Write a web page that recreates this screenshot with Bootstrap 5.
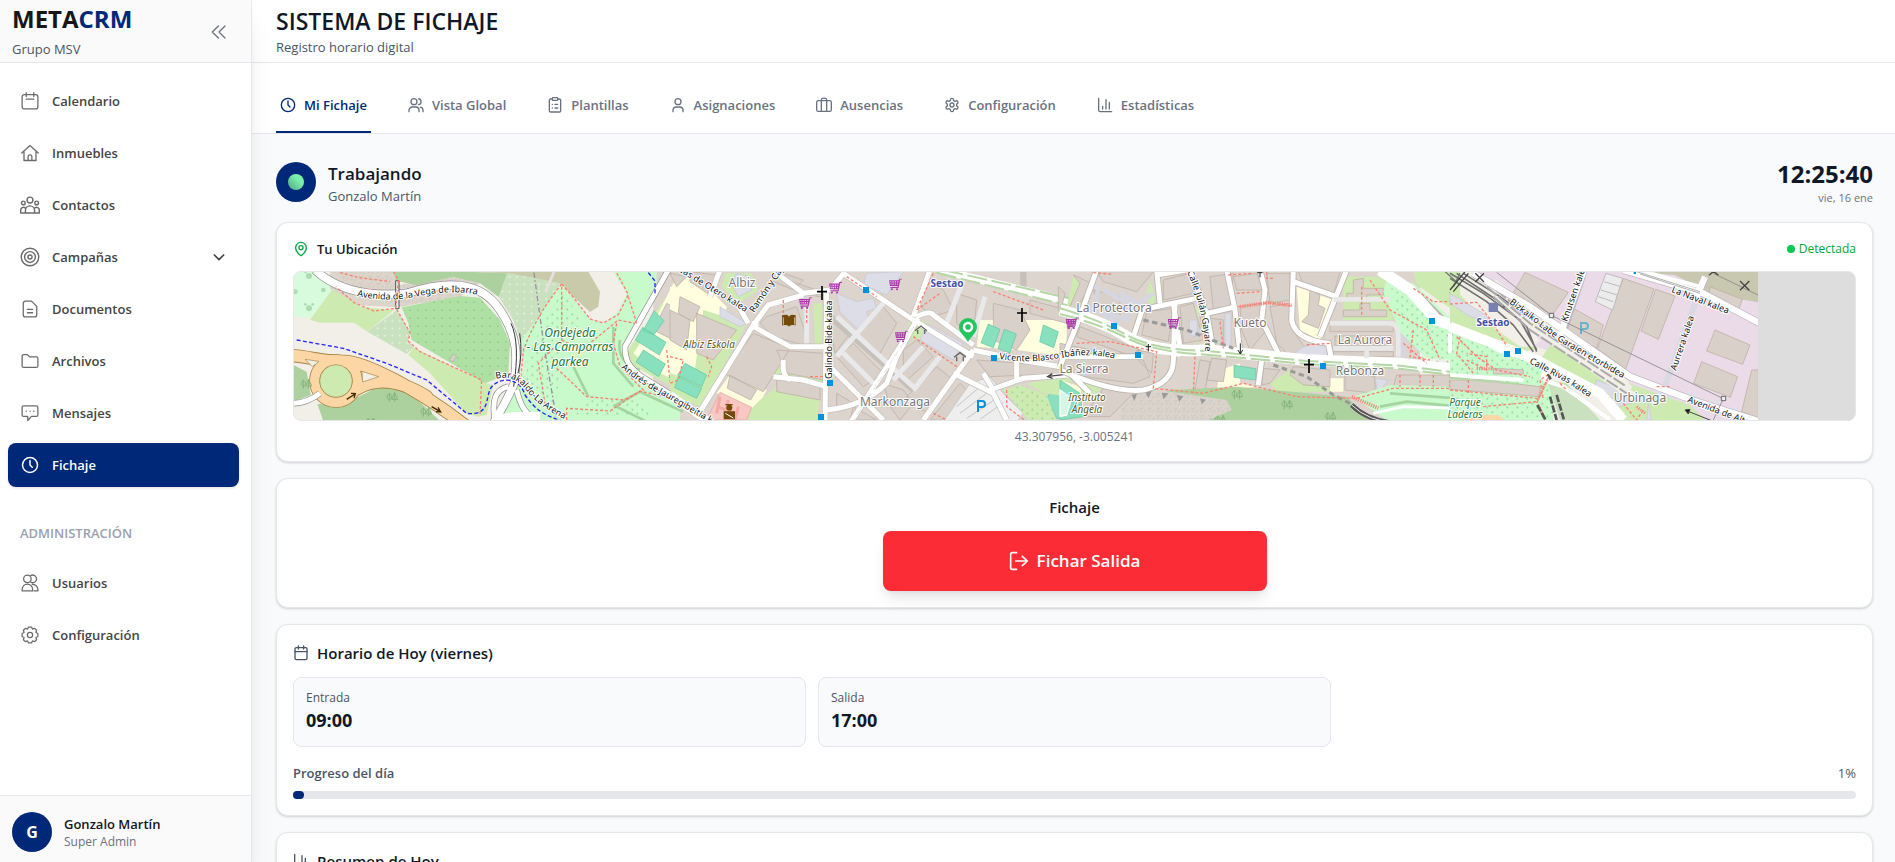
<!DOCTYPE html>
<html lang="es">
<head>
<meta charset="utf-8">
<meta name="viewport" content="width=device-width, initial-scale=1">
<title>METACRM - Sistema de Fichaje</title>
<link href="https://cdn.jsdelivr.net/npm/bootstrap@5.3.0/dist/css/bootstrap.min.css" rel="stylesheet">
<style>
:root{--navy:#002878;--line:#e5e7eb;--ink:#101828;--muted:#6a7282;--slate:#4a5565}
body{font-family:"Open Sans","Noto Sans",sans-serif;font-size:13px;line-height:20px;color:var(--ink);background:#f9fafb}
a{text-decoration:none;color:inherit}
svg.ic{fill:none;stroke:currentColor;stroke-width:2;stroke-linecap:round;stroke-linejoin:round;flex:none;width:16px;height:16px}
.side{width:252px;background:#fff;border-right:1px solid var(--line);box-shadow:0 20px 25px -5px rgba(0,0,0,.1),0 8px 10px -6px rgba(0,0,0,.1);z-index:2}
.side-head{height:63px;background:#fafafa;border-bottom:1px solid var(--line)}
.brand{font-size:24px;line-height:32px;font-weight:700;color:#171717}
.brand span{color:var(--navy)}
.side-nav{padding:16px 12px 0 8px}
.side-link{height:44px;padding:0 12px;border-radius:8px;font-weight:600;color:#454545;gap:12px}
.side-link svg.ic{width:20px;height:20px;padding:1px;color:#6b6b6b;stroke-width:1.7}
.side-link svg.wide{padding:0}
.side-link svg.chev{width:16px;height:16px;padding:0;color:#454545;stroke-width:2.5}
.side-link.on{background:var(--navy);color:#fff;box-shadow:0 1px 3px rgba(0,0,0,.12)}
.side-link.on svg.ic{color:#fff;stroke-width:2}
.side-label{font-size:13px;font-weight:600;color:#99a1af;padding:28px 12px 10px}
.side-foot{height:67px;padding-top:6px;background:#fafafa;border-top:1px solid var(--line)}
.disc{width:40px;height:40px;border-radius:50%;background:var(--navy);color:#fff;flex:none}
.top{height:63px;background:#fff;border-bottom:1px solid var(--line)}
.top h1{font-size:23px;line-height:32px;font-weight:600}
.tabs{height:71px;background:#fff;border-bottom:1px solid var(--line);gap:33px}
.tabs a{font-weight:600;color:var(--muted);padding:16px 4px 0;gap:8px;border-bottom:2px solid transparent}
.tabs a.on{color:var(--navy);border-color:var(--navy)}
.content{padding:24px 22px 0 24px;gap:16px}
.panel{background:#fff;border:1px solid var(--line);border-radius:12px;padding:16px;box-shadow:0 1px 3px rgba(0,0,0,.1),0 1px 2px rgba(0,0,0,.08)}
.t-sm{font-size:12px;line-height:16px}
.t-xs{font-size:11px;line-height:16px}
.t-h{font-size:15px;line-height:24px;font-weight:600}
.t-lg{font-size:17px;line-height:24px}
.hour{font-size:18px;line-height:28px}
.clock{font-size:24px;line-height:32px;font-weight:700}
.muted{color:var(--muted)}.slate{color:var(--slate)}.ok{color:#00a63e}
.live{width:16px;height:16px;border-radius:50%;background:linear-gradient(45deg,#4fa38a,#7bf1a8 65%)}
.map{height:150px;border:1px solid var(--line);border-radius:8px;background:#ddd;overflow:hidden}
.map svg{display:block}
.out{width:384px;max-width:100%;height:60px;border:0;border-radius:8px;background:#fb2c36;color:#fff;font-size:17px;font-weight:600;box-shadow:0 10px 15px -3px rgba(0,0,0,.1),0 4px 6px -4px rgba(0,0,0,.1)}
.out svg.ic{width:20px;height:20px}
.slot{height:70px;border:1px solid var(--line);border-radius:8px;background:#f9fafb;padding:12px}
.hours{display:grid;grid-template-columns:repeat(3,1fr);gap:12px}
.track{height:8px;border-radius:4px;background:#e5e7eb}
.track div{height:8px;border-radius:4px;background:var(--navy)}
.map text{font-family:"Noto Sans",sans-serif;paint-order:stroke;stroke:#fff;stroke-width:2px;stroke-linejoin:round}
.st{font-size:9px;fill:#111}
.pl{font-size:12px;fill:#777}
.gr{font-size:12px;font-style:italic;fill:#1c7a3a}
.sc{font-size:10px;font-style:italic;fill:#5c5a1a}
.sn{font-size:10px;font-weight:700;fill:#4451a8}
.b{fill:#d9d0c9;stroke:#c0b2a6;stroke-width:2.5}
.lg{fill:#cdebb0}.fo{fill:#add19e}.pk{fill:#c8facc}.ye{fill:#ffffe0}.pi{fill:#88e0be;stroke:#5fc4a0;stroke-width:2}.pz{fill:#dddde8;stroke:#c5c5d4;stroke-width:2}
.rd{fill:none;stroke:#fa8072;stroke-width:4;stroke-dasharray:9 6}
.bl{fill:none;stroke:#2323ff;stroke-width:4;stroke-dasharray:12 7}
.rl{fill:none;stroke:#707070;stroke-width:5}
.gl{fill:none;stroke:#b5d6a5;stroke-width:6;stroke-dasharray:60 14}
.bus{fill:#0092da}
</style>
</head>
<body>
<svg width="0" height="0" class="position-absolute" aria-hidden="true"><defs>
<symbol id="clock" viewBox="0 0 24 24"><circle cx="12" cy="12" r="10"/><path d="M12 6v6l3 3"/></symbol>
<symbol id="cal" viewBox="0 0 24 24"><rect x="1.500" y="3.500" width="21" height="19" rx="3"/><path d="M7 1v5M17 1v5M7 9.500h10"/></symbol>
<symbol id="gear" viewBox="0 0 24 24"><circle cx="12" cy="12" r="3.500"/><path d="M8.700 4.100L10 1.500h4l1.300 2.600 3-.9 2.500 2.500-.9 3 2.600 1.300v4l-2.600 1.300.9 3-2.500 2.500-3-.9-1.300 2.600h-4l-1.300-2.600-3 .9-2.500-2.500.9-3L1.500 14v-4l2.600-1.300-.9-3 2.500-2.500z"/></symbol>
<symbol id="bars" viewBox="0 0 24 24"><path d="M2.500 2v18a2 2 0 0 0 2 2H22M8.500 18v-4M13.500 18V4M18.500 18V8"/></symbol>
<symbol id="cart" viewBox="0 0 40 34"><path d="M38 1h-6l-5 24H5M3 6h27l-3 13H5zM9 6l1 13M16 6v13M23 6l-1 13M3 12h26" fill="none" stroke="#ac39ac" stroke-width="3"/><circle cx="9" cy="30" r="3" fill="#ac39ac"/><circle cx="24" cy="30" r="3" fill="#ac39ac"/></symbol>
<pattern id="dots" width="24" height="24" patternUnits="userSpaceOnUse"><circle cx="6" cy="6" r="1.600" fill="#5f9b5c"/></pattern>
<pattern id="plus" width="22" height="22" patternUnits="userSpaceOnUse"><path d="M4 7h6M7 4v6" stroke="#eef7ea" stroke-width="2"/></pattern>
<pattern id="shrub" width="30" height="26" patternUnits="userSpaceOnUse"><circle cx="7" cy="7" r="3" fill="#97d3a0"/><circle cx="22" cy="19" r="3" fill="#97d3a0"/></pattern>
<pattern id="rock" width="26" height="22" patternUnits="userSpaceOnUse"><path d="M3 4l5 3M14 2l-4 6M20 9l4 4M5 15l6-2M16 18l5-3" stroke="#c5bcb2" stroke-width="2.500"/></pattern>
</defs></svg>

<div class="d-flex vh-100 overflow-hidden">
<aside class="side d-flex flex-column flex-shrink-0 position-relative">
  <div class="side-head flex-shrink-0 d-flex justify-content-between align-items-center ps-2 pe-4">
    <div class="ps-1"><div class="brand">META<span>CRM</span></div><div class="slate mt-1">Grupo MSV</div></div>
    <button class="btn p-0 border-0 lh-1 muted" aria-label="Contraer menú"><svg class="ic" viewBox="0 0 24 24"><path d="M11 3l-9 9 9 9M21 3l-9 9 9 9"/></svg></button>
  </div>
  <nav class="side-nav d-flex flex-column gap-2 flex-grow-1">
    <a href="#" class="side-link d-flex align-items-center"><svg class="ic"><use href="#cal"/></svg>Calendario</a>
    <a href="#" class="side-link d-flex align-items-center"><svg class="ic" viewBox="0 0 24 24"><path d="M1 12L12 2l11 10M4 9.500V22h16V9.500M9.500 22v-5a2.500 2.500 0 0 1 5 0v5"/></svg>Inmuebles</a>
    <a href="#" class="side-link d-flex align-items-center"><svg class="ic wide" viewBox="0 0 24 24"><circle cx="12" cy="6" r="3.500"/><circle cx="4" cy="9.500" r="2.200"/><circle cx="20" cy="9.500" r="2.200"/><path d="M6.500 21.500v-3a5.500 5.500 0 0 1 11 0v3zM6 21.500H.8V18a3.300 3.300 0 0 1 5.400-2.500M18 21.500h5.200V18a3.300 3.300 0 0 0-5.400-2.500"/></svg>Contactos</a>
    <a href="#" class="side-link d-flex align-items-center"><svg class="ic wide" viewBox="0 0 24 24"><circle cx="12" cy="12" r="10.500"/><circle cx="12" cy="12" r="6.500"/><circle cx="12" cy="12" r="2.500"/></svg><span class="flex-grow-1">Campañas</span><svg class="ic chev" viewBox="0 0 24 24"><path d="M5 9l7 7 7-7"/></svg></a>
    <a href="#" class="side-link d-flex align-items-center"><svg class="ic" viewBox="0 0 24 24"><path d="M14 1.500H6a3 3 0 0 0-3 3v15a3 3 0 0 0 3 3h12a3 3 0 0 0 3-3V8.500zM8.500 12.500h7M8.500 17h7"/></svg>Documentos</a>
    <a href="#" class="side-link d-flex align-items-center"><svg class="ic" viewBox="0 0 24 24"><path d="M1.500 5.500a2 2 0 0 1 2-2h5l3 3h9a2 2 0 0 1 2 2v10a2 2 0 0 1-2 2h-17a2 2 0 0 1-2-2z"/></svg>Archivos</a>
    <a href="#" class="side-link d-flex align-items-center"><svg class="ic" viewBox="0 0 24 24"><path d="M3.500 2.500h17a2 2 0 0 1 2 2v10a2 2 0 0 1-2 2H14L9 22v-5.500H3.500a2 2 0 0 1-2-2v-10a2 2 0 0 1 2-2zM7 9.500h.2M12 9.500h.2M17 9.500h.2"/></svg>Mensajes</a>
    <a href="#" class="side-link on d-flex align-items-center"><svg class="ic"><use href="#clock"/></svg>Fichaje</a>
    <div class="side-label">ADMINISTRACIÓN</div>
    <a href="#" class="side-link d-flex align-items-center"><svg class="ic" viewBox="0 0 24 24"><circle cx="8.500" cy="6.500" r="5"/><path d="M13 2.200a5 5 0 1 1 0 8.600M1.500 22.500v-2a7 7 0 0 1 14 0v2zM15 14a7 7 0 0 1 7.500 6.500v2h-5"/></svg>Usuarios</a>
    <a href="#" class="side-link d-flex align-items-center"><svg class="ic"><use href="#gear"/></svg>Configuración</a>
  </nav>
  <div class="side-foot flex-shrink-0 d-flex align-items-center gap-2 ps-2">
    <div class="disc d-flex align-items-center justify-content-center fw-bold fs-6 ms-1">G</div>
    <div class="ps-1"><div class="fw-semibold">Gonzalo Martín</div><div class="t-sm muted">Super Admin</div></div>
  </div>
</aside>

<main class="flex-grow-1 d-flex flex-column overflow-hidden">
  <header class="top flex-shrink-0 ps-4 d-flex flex-column justify-content-center"><h1 class="m-0">SISTEMA DE FICHAJE</h1><div class="slate">Registro horario digital</div></header>
  <nav class="tabs flex-shrink-0 d-flex ps-4">
    <a href="#" class="on d-flex align-items-center"><svg class="ic"><use href="#clock"/></svg>Mi Fichaje</a>
    <a href="#" class="d-flex align-items-center"><svg class="ic" viewBox="0 0 24 24"><circle cx="9" cy="7" r="4.500"/><path d="M1.500 22v-2a5 5 0 0 1 5-5h5a5 5 0 0 1 5 5v2M16 2.600a4.500 4.500 0 0 1 0 8.800M22.500 22v-2a5 5 0 0 0-4-4.900"/></svg>Vista Global</a>
    <a href="#" class="d-flex align-items-center"><svg class="ic" viewBox="0 0 24 24"><rect x="8" y="1" width="8" height="4" rx="1"/><path d="M16 3h2.500a2 2 0 0 1 2 2v15.500a2 2 0 0 1-2 2h-13a2 2 0 0 1-2-2V5a2 2 0 0 1 2-2H8M12 11h4M12 16.500h4M8 11h.1M8 16.500h.1"/></svg>Plantillas</a>
    <a href="#" class="d-flex align-items-center"><svg class="ic" viewBox="0 0 24 24"><circle cx="12" cy="7" r="4.500"/><path d="M4.500 22v-2a5 5 0 0 1 5-5h5a5 5 0 0 1 5 5v2"/></svg>Asignaciones</a>
    <a href="#" class="d-flex align-items-center"><svg class="ic" viewBox="0 0 24 24"><rect x="1" y="5.500" width="22" height="16" rx="2.500"/><path d="M16 21V4a2 2 0 0 0-2-2h-4a2 2 0 0 0-2 2v17"/></svg>Ausencias</a>
    <a href="#" class="d-flex align-items-center"><svg class="ic" viewBox="0 0 24 24"><path d="M12.220 2h-.44a2 2 0 0 0-2 2v.18a2 2 0 0 1-1 1.730l-.43.25a2 2 0 0 1-2 0l-.15-.08a2 2 0 0 0-2.730.73l-.22.38a2 2 0 0 0 .73 2.730l.15.1a2 2 0 0 1 1 1.720v.51a2 2 0 0 1-1 1.740l-.15.09a2 2 0 0 0-.73 2.730l.22.38a2 2 0 0 0 2.730.73l.15-.08a2 2 0 0 1 2 0l.43.25a2 2 0 0 1 1 1.730V20a2 2 0 0 0 2 2h.44a2 2 0 0 0 2-2v-.18a2 2 0 0 1 1-1.730l.43-.25a2 2 0 0 1 2 0l.15.08a2 2 0 0 0 2.730-.73l.22-.39a2 2 0 0 0-.73-2.730l-.15-.08a2 2 0 0 1-1-1.740v-.5a2 2 0 0 1 1-1.740l.15-.09a2 2 0 0 0 .73-2.730l-.22-.38a2 2 0 0 0-2.730-.73l-.15.08a2 2 0 0 1-2 0l-.43-.25a2 2 0 0 1-1-1.730V4a2 2 0 0 0-2-2z"/><circle cx="12" cy="12" r="3"/></svg>Configuración</a>
    <a href="#" class="d-flex align-items-center"><svg class="ic"><use href="#bars"/></svg>Estadísticas</a>
  </nav>

  <div class="content d-flex flex-column">
    <div class="d-flex justify-content-between align-items-center">
      <div class="d-flex align-items-center"><div class="disc d-flex align-items-center justify-content-center me-2"><div class="live"></div></div>
        <div class="ps-1 pt-1"><div class="t-lg fw-semibold">Trabajando</div><div class="slate">Gonzalo Martín</div></div></div>
      <div class="text-end"><div class="clock">12:25:40</div><div class="t-xs muted">vie, 16 ene</div></div>
    </div>

    <section class="panel">
      <div class="d-flex justify-content-between align-items-center mb-2 pb-1">
        <div class="d-flex align-items-center gap-2 fw-semibold"><svg class="ic ok" viewBox="0 0 24 24"><path d="M20 10c0 5-5.500 10.200-7.400 11.800a1 1 0 0 1-1.200 0C9.500 20.200 4 15 4 10a8 8 0 0 1 16 0z"/><circle cx="12" cy="10" r="3"/></svg>Tu Ubicación</div>
        <div class="d-flex align-items-center gap-1 t-sm ok"><svg width="8" height="8"><circle cx="4" cy="4" r="4" fill="#00c950"/></svg>Detectada</div>
      </div>
      <div class="map"><svg width="1464" height="148" viewBox="294 272 1464 148" role="img" aria-label="Mapa de tu ubicación">
<rect x="294" y="272" width="1464" height="148" fill="#f2efe9"/>
<g transform="translate(280 260) scale(.33333)">
  <path d="M1120 30H3420V490H1120z" fill="#dcd4cd"/>
  <path d="M40 35h90l35 42-75 98-50-6z" fill="#d7fbdc"/>
  <path class="lg" d="M90 180l72-100 80 60 100 10-80 65-40-27H120zM385 285l15-23 205 100-5 108-40-8L450 340zM600 365l40 10-20 90-30 5z"/>
  <path d="M150 35h190l20 40 150-30 90 25-60 40-190 32-110-6-90-50z" fill="#ddd5cb"/><path d="M150 35h190l20 40 150-30 90 25-60 40-190 32z" fill="url(#rock)"/>
  <path class="fo" d="M340 35h220l122 5-25 72-57-42-80-20-110 25-60-12z"/>
  <path d="M560 35h365l35 60-5 45-25 16-50-46-42-40-155-30z" fill="#c8caaa"/>
  <path fill="#aedfa3" d="M365 142l175-34 60 5 60 67 30 70-5 92-70 28-220-130-10-50z"/><path fill="url(#dots)" d="M365 142l175-34 60 5 60 67 30 70-5 92-70 28-220-130-10-50z"/>
  <path fill="#c9e1bf" d="M262 215l88-65 40 65-5 25 15 22-20 20zM682 38l160 32-82 140-38 36-22-66-44-70z"/><path fill="url(#plus)" d="M262 215l88-65 40 65-5 25 15 22-20 20zM682 38l160 32-82 140-38 36-22-66-44-70z"/>
  <path class="pk" d="M845 70l85 108 40 12 40-30 30-58-40-67h130v65l-100 150v50l170 130v50H630l100-150-5-90z"/><path fill="url(#shrub)" d="M845 90l60 90-60 100-20 180-90-60 10-120zM930 420l110-10 100 60H880z"/>
  <path class="lg" d="M1030 300l20-40 110-150 20 20v250l-80-40z"/>
  <path class="ye" d="M1180 70l60-30 100 100-30 160-60 90-130-60-60-50 60-90z"/>
  <path class="b" d="M1160 130l60 30v100l-40-20-60-30zM1170 40l50 10-30 30z"/>
  <path class="pi" d="M1122 152l30 30-30 42-32-12zM1088 202l70 45-20 38-72-45zM1090 270l66 42-20 38-68-44z"/>
  <path class="fo" d="M112 432l88-4 100-50 90 20 90 85H130zM40 315l40 20 12 70-52 20z"/>
  <g fill="none" stroke-linecap="round"><g stroke="#a58342"><circle cx="168" cy="363" r="64" stroke-width="33"/><path stroke-width="40" d="M30 286C90 290 130 306 190 304S420 390 560 500M232 386C290 352 360 360 440 410"/></g>
  <g stroke="#fcd6a4"><circle cx="168" cy="363" r="64" stroke-width="28"/><path stroke-width="35" d="M30 286C90 290 130 306 190 304S420 390 560 500M232 386C290 352 360 360 440 410"/></g></g>
  <circle class="lg" cx="168" cy="363" r="49" stroke="#a58342" stroke-width="2"/>
  <path d="M75 298l42 6-20 16zM246 334l50 16-48 16z" fill="#f2efe9" stroke="#a58342" stroke-width="2"/>
  <path d="M200 418l25-16m-12-2l13 1-4 13M455 440l25 14m-6-12l8 14-14-1" stroke="#402800" stroke-width="4" fill="none"/>
  <path d="M1020 240c-10 50 20 80 60 90M1000 440l80-45 130 60M880 320l45 90M1000 200v110l60 70M1000 435l100 50" stroke="#a5d4a0" stroke-width="8" fill="none"/>
  <g fill="none" stroke="#8e8e8e" stroke-width="27"><path d="M105 30C170 90 260 112 380 100C500 62 600 60 660 150S710 300 703 370C690 400 670 440 640 490"/><path stroke-width="19" d="M645 480c-10-60 0-90 40-100M710 390c10 40 20 70 70 100M1165 30l-130 230c0 40 10 60 50 90l130 80M40 430q40 0 80-30"/></g>
  <g fill="none" stroke="#fff" stroke-width="23"><path d="M105 30C170 90 260 112 380 100C500 62 600 60 660 150S710 300 703 370C690 400 670 440 640 490"/><path stroke-width="15" d="M645 480c-10-60 0-90 40-100M710 390c10 40 20 70 70 100M1165 30l-130 230c0 40 10 60 50 90l130 80M40 430q40 0 80-30"/></g>
  <path d="M640 480l60-12 80 0" stroke="#fff" stroke-width="24"/>
  <path d="M693 190q28 60 8 190M719 220q10 60-5 120" stroke="#333" stroke-width="3" fill="none"/>
  <path d="M347 62h10v84h-10z" fill="#eee" stroke="#555" stroke-width="3"/>
  <path d="M508 300l12-18 10 8-12 16z" fill="#d9d0c9" stroke="#aaa" stroke-width="2"/>
  <path class="bl" d="M50 240l140 25 130 45 120 50 120 100c80 10 50-60 80-85s80-20 95 30c35 50 60 60 110 78M1105 38l20 25v40"/>
  <path class="rd" d="M180 38l60 15 90 12M340 35l15 25-8 85-65 8-60-25-55-48M350 148l40 70-5 25 35 32 185 85-5 105M845 72q-80 100-115 200l-10 110M845 72l35 40 50 65 40 12 45-25 30-60-40-75M845 80v160l-70 70 20 120 60 45M845 240l60 30 110-90 50 10M1010 190l-10 60 20 70 70 70-60 30-110-10-100-95M860 480v-35l130 8 90-60 130 30M1045 110l25 80M1160 270l10 90 30-60"/>
  <path d="M762 38l30 220 38 222" stroke="#998fa5" stroke-width="4" stroke-dasharray="16 7 5 7" fill="none"/>
  <path d="M822 35l-25 60" stroke="#e8e0e0" stroke-width="8"/>
  <g fill="none" stroke="#86b57c" stroke-width="3"><path id="tr" d="M328 400c-10 6-8 18 0 18s10-12 0-18v26M344 398l-9 20h18zv28"/><use href="#tr" x="-258" y="-40"/><use href="#tr" x="102" y="44"/><use href="#tr" x="-64" y="76"/></g>
  <g fill="#aedcb2"><circle cx="87" cy="48" r="9"/><circle cx="77" cy="36" r="4"/><circle cx="99" cy="36" r="4"/><circle cx="87" cy="145" r="9"/><circle cx="76" cy="133" r="4"/><circle cx="98" cy="133" r="4"/><circle cx="130" cy="90" r="7"/><circle cx="46" cy="95" r="7"/></g>
</g>
<g transform="translate(670 260) scale(.33333)">
  <path class="ye" d="M0 80l60 10 60 60 60 40-60 100-20 130L0 380zM190 330l100 60-30 60-120-50zM930 180h260v110l-150-20-120-10z"/>
  <path class="lg" d="M100 150l130 40-30 60-110 190-90-40v-60l70 20zM430 130h25v120l-20 10zM320 380l130 40-10 60H210l60-60zM290 300l80 10 100 50v20h-60l-110-30zM165 40h80l20 50-60 40-50-50zM720 170l60 20-30 50-40-10z"/>
  <path class="b" d="M30 110l60 30-20 45-45-25zM0 150l60 30-10 90-50-30zM80 160l120 50-70 90-50-20zM250 220l110 45-80 130-120-55zM180 345l80 45-18 30-70-35zM60 35l80 10-20 60-60-40zM350 60l120 40-20 10-60-10-30-30zM290 170l90-30 40 120-110-30-40-40zM320 270l140 10v80l-110-20zM320 360l130 10v50l-130-25zM480 180l60 40-45 60zM500 290l50-40 90 90-60 40zM500 400l50 30-50 20zM560 220l70 60 50-90-40-50zM640 370l60 20 30 40-40 50-30-40zM700 270l40-30 50 50-90 80zM800 320l50 40-80 100-60-50zM870 370l50 50-60 60h-80zM770 60l50 30 30 60-60 20-50-40zM860 100l60 20-10 110-50-40zM970 130l80 20 30 60-40 60-70-30zM1080 120l110 30v40l-110-30zM920 300l270 20v20l-230 10zM550 440l70 40h-80zM300 60l40-20 60 20-30 30z"/>
  <path class="pi" d="M45 310l65 35-15 35-72-35zM25 350l70 35-15 30-66-32zM955 192l35 16-20 55-37-15zM1003 208l36 14-20 58-35-15zM1120 195l45 20-14 48-42-18zM1160 370l30 15v90h-30l-30-60z"/>
  <path fill="#f8c8c4" stroke="#e6a09a" stroke-width="2" d="M150 397l95 45-15 38H110z"/>
  <path class="pz" d="M500 100l60 25 50-10 10 30-30 10 10 40-40 10-50-50zM200 40l40 10 5 40-40 20-20-35zM770 190l110 60-30 50-100-60zM590 40l110-5-50 70-70-30zM150 140l80 50-20 10-60-30z"/>
  <path d="M900 370l60-20 40 50 60 60-20 25H820z" fill="#eee" stroke="#c8c8c8" stroke-width="3"/><path d="M860 440l70-60M870 460l80-60M890 475l90-60M930 478l70-50" stroke="#c4c4c4" stroke-width="3"/>
  <path class="lg" d="M1000 390l50-15 80 30 30 80h-80zM1070 370l130-20v60l-80-10z"/><path d="M1000 390l50-15 80 30 30 80h-80z" fill="url(#shrub)"/>
  <g fill="none" stroke="#c6c0bb" stroke-width="19" stroke-linejoin="round"><path d="M150 30l-30 80M320 40l80 60 80-10 45-55M400 105l-105 30-45 60-160 260M235 190l-40-70M250 200l110 60h110M470 100l-5 380M470 160l260 230M520 40l210 140 180 110M540 490L745 175M480 320l160 160M470 450q110-10 180-80l30-80 60-110M910 270l-150 210M910 270l140 30 150 25M960 390l100-35 140-10M740 170q40-20 50-5l120 90M310 350l90 10 70 20M1060 35v60M850 340l120 60 40 80M340 300q-5 50 20 60M1040 290v70M940 340l30 50M780 30l-50 140"/></g>
  <g fill="none" stroke="#e9e9ec" stroke-width="15"><path d="M500 290L640 130M670 360l90-100M730 390l80-100M500 170l240 220M410 130v120M520 280l90 90M830 190l50-130M910 230l35-120"/></g>
  <g fill="none" stroke="#fff" stroke-width="15" stroke-linejoin="round"><path d="M150 30l-30 80M320 40l80 60 80-10 45-55M400 105l-105 30-45 60-160 260M235 190l-40-70M250 200l110 60h110M470 100l-5 380M520 40l210 140 180 110M540 490L745 175M480 320l160 160M470 450q110-10 180-80l30-80 60-110M910 270l-150 210M910 270l140 30 150 25M960 390l100-35 140-10M740 170q40-20 50-5l120 90M310 350l90 10 70 20M850 340l120 60 40 80M340 300q-5 50 20 60M1040 290v70M940 340l30 50M780 30l-50 140"/><path stroke-width="24" d="M0 405l110 75M810 30l390 95M245 195h20"/></g>
  <path class="gl" d="M800 38l400 100M820 30l380 85"/>
  <path class="rd" d="M0 290l40 10-15 60-25 10M110 290l15 30-10 30M530 50l90 60M340 120v60M730 230l130 90M420 350h50M790 460l40 20M790 40l-50 110M970 95l150 55M410 150v45M1010 390v50l60 45M740 150l70-50"/>
  <path d="M545 490l190-295" stroke="#e2e2e2" stroke-width="3" stroke-dasharray="18 12"/>
  <path d="M150 410l-10 50M175 420l-10 55M205 440l-10 40M140 440l60 20" stroke="#f5aaa5" stroke-width="9"/>
  <path d="M336 166q20-6 21 6q2-12 20-6v30q-18-4-20 4q-2-8-21-4z" fill="#734a08"/><path d="M340 172v22M374 172v22" stroke="#fff" stroke-width="2"/>
  <circle cx="178" cy="443" r="9" fill="#734a08"/><path d="M163 456h30v20h-30zM166 434h22" fill="#734a08" stroke="#734a08" stroke-width="4"/><path d="M166 460l24 14" stroke="#fff" stroke-width="3"/>
  <g fill="none" stroke="#666" stroke-width="4"><path d="M735 212l18-14 18 14M743 210v12M764 210v12M852 292l18-14 18 14M860 290v14M880 290v14"/></g>
  <use href="#cart" x="476" y="66" width="42" height="36"/><use href="#cart" x="656" y="56" width="42" height="36"/><use href="#cart" x="386" y="112" width="42" height="36"/><use href="#cart" x="674" y="212" width="42" height="36"/><use href="#cart" x="1187" y="172" width="42" height="36"/>
  <path d="M456 78v42M441 95h30M1056 144v42M1041 159h30" stroke="#000" stroke-width="5"/>
  <path class="bus" d="M579 81h18v18h-18zM471 360h18v18h-18zM444 462h18v18h-18zM963 285h18v18h-18z"/>
  <path d="M1180 344l-45 5m12-8l-14 9 15 5" stroke="#444" stroke-width="4" fill="none"/>
</g>
<g transform="translate(1060 260) scale(.33333)">
  <path class="lg" d="M40 50l50 20-40 90-30-20zM270 60l20 60-20 20-10-40zM385 150l30-10v110l-40-10zM630 370l60-40 120 40v25H650zM30 340l110 30-60 60-30-40zM850 50h130l20 130H850zM1060 35h140v130l-130-90z"/>
  <path class="ye" d="M710 80l110 40-40 120-60-30zM480 330l60-20v60l60 10-130 10zM810 355h40v40h-40zM0 210l20-5-8 70-12 4zM0 360l60 20 10 60-70-10z"/>
  <path class="b" d="M40 45l55 25-60 100-40-20V80l20 20-10 40 20 10 35-80zM310 60l80-20 10 60-90 20zM100 90l80 20v60l-60-30zM110 35h170l-50 60-100-30zM260 155l80-10-15 100-80-20zM60 200l180 70-20 20-170-60zM360 140l40-10 30 110-60 10zM450 50l70-10-10 100-50 10zM420 170l70 10v90l-50-10zM520 50l70-10 20 50h-80zM540 140l60-10 20 80-50 60-25-60zM620 40h70v80l-60 10zM630 140l60-10 20 100 40 50-50 20-50-50zM420 300l30 5-15 90-30-5zM455 295l45 5-10 65-50-5zM610 325l50 5-30 40-25 5zM700 320l110 10v50l-80-5-40-30zM855 330l90 20v50l-90-10zM750 90l30 15-5 30 20 10-20 60-50-20 20-20zM715 35h125l-20 70-90-30zM880 60l30-5v30h60v20h-50v15h-60v-20h20zM850 150h50v-20h30v20h50v20H850zM810 195h190v20H810zM825 228h170v25l-60 5h-110zM810 275h190v15H820zM1010 345h190v35H1000zM0 250l190 40 60 10 20 50-50 20-220-30zM140 370l80 30-70 70h-80zM230 270l50 10-5 60-40-40z"/>
  <path d="M95 75l20 10-10 60 60 40M180 100l40 20-20 60-80-30M280 100l-60 40-90-50M1030 190v110" stroke="#d6d6e2" stroke-width="13" fill="none"/><path class="pz" d="M700 285q45-50 105-25l10 35zM388 180h24v50l-24-5zM495 160h18v100h-18zM945 355l40 5-30 40z"/>
  <path class="pi" d="M522 316l66 10v34l-66-8zM0 360l60 40 10 70-70 10z"/><path d="M0 390l35 25-15 50-20 5z" fill="#d5f7e4" stroke="#fff" stroke-width="4"/>
  <path class="fo" d="M330 390l200-10 330 30 70 70H180z"/><path fill="#dbd4cc" d="M180 480q-5-50 50-75l100-10 170 25 15 30-70 30z"/><path fill="url(#rock)" d="M180 480q-5-50 50-75l100-10 170 25 15 30-70 30z"/>
  <path d="M215 405l8 18 8-22M255 395l10 20 10-22M305 398l6 20 14-18M350 405l8 20 12-16M420 415l6 18 12-14" fill="#999"/>
  <path class="pk" d="M880 410l110-35 210 5 60 100H980zM980 60l80 10 140 130v100l-100-5-80-80-50-120z"/><path d="M990 80l90 60 120 110v80h-90l-80-110z" fill="url(#shrub)"/>
  <path d="M990 400l200 15M960 440l80-15 160 15" stroke="#a5d4a0" stroke-width="8" fill="none"/>
  <g fill="none" stroke="#bab4ae" stroke-width="20"><path d="M110 30L60 170l-60 150M290 30l10 100M240 150l170-35M250 140l-30 90M340 130l20 130-5 30M440 160l20 110M390 30l50 130 90-20M500 30l25 120 15 130M600 30l15 60-10 90 55 110M700 30l-5 150q10 60 110 70l10 50M860 30l-80 200M700 65l130 45M0 290h250M0 330q160 70 250 60q90-20 90-90l5-170M605 300l-10 75M30 340l60 60M290 45l90-15M1060 90l90 90 90 30"/></g>
  <g fill="none" stroke="#fff" stroke-width="15"><path d="M110 30L60 170l-60 150M290 30l10 100M240 150l170-35M250 140l-30 90M340 130l20 130-5 30M440 160l20 110M390 30l50 130 90-20M500 30l25 120 15 130M600 30l15 60-10 90 55 110M700 30l-5 150q10 60 110 70l10 50M860 30l-80 200M700 65l130 45M0 290h250M0 330q160 70 250 60q90-20 90-90l5-170M605 300l-10 75M30 340l60 60M290 45l90-15"/><path stroke-width="34" d="M0 150q120 30 200 80t240 40l300 30 280 10 180 20M960 30l90 60 80 90 120 40"/><path stroke-width="8" d="M940 460l90-20 170 5"/></g>
  <path d="M820 118h170M810 190h180q25 0 25 40v60M820 265h180M920 265v30" stroke="#e8e8e8" stroke-width="14" fill="none"/>
  <path class="gl" d="M0 145q120 35 200 80t240 48l300 30 280 14 180 22M0 162q120 30 200 72t240 50l300 28 280 14 180 22"/>
  <path d="M250 180l130 30 140 55M640 315l100 35 80 55 60 30" stroke="#999" stroke-width="9" stroke-dasharray="16 11" fill="none"/>
  <path class="rd" d="M50 250l100-5 140 30-10 110 150 15 120-30 160 40 180 5 110-30h200M535 140l90-12 70 10M530 100l70-5M480 185l10 80M905 80v90M405 290l-5 110M1060 85l60 40h80M620 35v20h20M505 45l70-5M930 60l60 90 110 60 40 90M100 38l60 5M1030 250l70 60M1020 345v35M1080 345v35M1120 345v35M1170 345v35M1060 210l-10 80 60 10M740 255l70-5"/><path d="M540 140l85-12 70 8M875 410l80 34" stroke="#f58d82" stroke-width="11" stroke-dasharray="4 3" fill="none"/>
  <path d="M875 435q50 50 140 55" stroke="#555" stroke-width="14" fill="none"/><path d="M875 435q50 50 140 55" stroke="#eee" stroke-width="3" fill="none"/>
  <path d="M1150 30l50 45M1200 40l-30 60" stroke="#777" stroke-width="4"/>
  <g fill="none" stroke="#86b57c" stroke-width="3"><use href="#tr" x="195" y="-8"/><use href="#tr" x="345" y="22"/><use href="#tr" x="475" y="58"/><use href="#tr" x="145" y="68"/></g>
  <use href="#cart" x="16" y="172" width="42" height="36"/><use href="#cart" x="322" y="172" width="42" height="36"/>
  <path d="M747 297v42M732 314h30" stroke="#000" stroke-width="5"/><path d="M265 252v22M257 260h16M541 250v32M534 270l7 12 7-12M592 38h16M600 38v14" stroke="#222" stroke-width="3" fill="none"/>
  <path class="bus" d="M153 189h18v18h-18zM225 276h18v18h-18zM780 309h18v18h-18zM1107 174h18v18h-18z"/>
</g>
<g transform="translate(1450 150) scale(.33333)">
  <path d="M80 360h850v460H640L520 680 260 590z" fill="#ebdbe8"/>
  <path d="M540 365h384v92l-130-22-120-60z" fill="#c8c8b0"/>
  <path class="lg" d="M0 400l100 110 110 80 60 0-60 20-210-90zM300 585l70 30 180 90 170 60 50 50H520l-90-90-130-60-40-20z"/>
  <path class="pk" d="M0 550l120 40 140 50 50 60v110H0z"/><path d="M0 550l120 40 140 50 50 60v110H0z" fill="url(#shrub)"/>
  <path d="M290 690l60 10 100 110H330z" fill="#c9e1bf"/><path d="M60 795h80l30 17H40z" fill="#fcd6a4"/>
  <path class="b" d="M225 367l130 60-48 68-118-65zM370 475l90 50-20 70-90-50zM520 385l92 32-85 240-85-60zM617 418l58 20-50 130-52-25zM780 410l97 38-14 38-88-36zM795 540l105 45-22 58-108-40zM755 635l108 45-22 62-110-42zM905 660h20v145l-50-20zM0 690h100l170 20v30L0 718zM130 655l90 5v12h-90z"/>
  <path d="M468 370l50 15-30 95-52-25z" fill="#ececec" stroke="#bbb" stroke-width="3"/><path d="M462 395l50 15M452 420l50 15M445 440l45 15" stroke="#bbb" stroke-width="3"/>
  <path class="pz" d="M0 430l100 60 20 20-60-10-60-40zM440 690l80 30 20 40-60 20-50-60zM595 760l10 50h-15z"/>
  <path d="M200 490L550 740M100 390l160 190M130 400L540 690M150 420L540 720" stroke="#f2efe9" stroke-width="26"/>
  <g class="rl"><path d="M0 370l100 60 110 80 50 90M0 385l110 70 80 70 60 80M20 370l120 80 90 80 30 75M40 370l110 70 80 60"/><path stroke="#aaa" stroke-width="6" stroke-dasharray="40 7" d="M100 390l150 120 290 180M110 410l130 110 290 190M130 440l110 100 290 190"/></g>
  <g fill="none" stroke="#c2b8c0" stroke-width="23"><path d="M70 370l170 100 300 210 200 75 190 60M400 365l-60 180M520 360l240 70 170 90M765 380L740 450"/></g>
  <g fill="none" stroke="#fff" stroke-width="19"><path d="M70 370l170 100 300 210 200 75 190 60M400 365l-70 190M520 360l240 70 170 90M765 380L740 440"/><path stroke-width="30" d="M0 530l130 50 130 50 190 100 70 80"/><path stroke-width="12" d="M280 690l60 20 140 100M0 675l220 15M0 550v60M580 365l170 45"/><path stroke-width="20" d="M100 560q40 50 130 55 70 20 50 75"/></g>
  <path d="M735 460l-90 250" stroke="#d8d9e4" stroke-width="18"/>
  <path d="M560 365l190 60M570 372l180 58" stroke="#888" stroke-width="2"/>
  <path d="M0 683l220 20" class="gl"/>
  <path class="rd" d="M0 462l80-5 40 50 50 80M20 560l60 60 60 40 100 20M0 720l260 25M30 560l-10 50 50 60M50 630l60 30v-40l-60-10M260 760l40-90-30 20 10 60M100 770l160-15M330 700l20 20M520 760l40 50 20-30M620 710h40M55 690v40"/>
  <path d="M80 655l50 2M262 750l30-60M265 765l20 45M560 770l25 20" stroke="#f58d82" stroke-width="9" stroke-dasharray="4 3"/>
  <path d="M300 740l20 70M320 735l22 75M294 672l8 16M262 765l25 45" stroke="#555" stroke-width="8" stroke-dasharray="22 5"/>
  <path d="M140 367l164 129 516 250-30 64M790 370l134 65" stroke="#888" stroke-width="2.500" fill="none"/><path d="M298 490h13v13h-13zM814 739h13v13h-13z" fill="#eee" stroke="#666" stroke-width="3"/>
  <path d="M76 370l26 26m0-26l-26 26M777 376l14-12 14 12M870 393l28 28m0-28l-28 28M0 420l45-55M10 425l45-55" stroke="#444" stroke-width="4" fill="none"/>
  <path d="M705 780l15-2-5 14zM712 783l75 30" stroke="#444" stroke-width="3"/>
  <path d="M116 458h28v28h-28z" fill="#7981b0"/><path class="bus" d="M162 603h18v18h-18zM195 594h18v18h-18zM551 360h7v12h-7z"/>
</g>
<path d="M968 342c-3-6-9-9-9-15a9 9 0 0 1 18 0c0 6-6 9-9 15z" fill="#22c55e"/><circle cx="968" cy="327" r="4" fill="none" stroke="#fff" stroke-width="2.500"/>
<defs>
<path id="p1" d="M357 296Q388 303 420 296T478 295"/><path id="p2" d="M496 379Q514 374 526 390T564 419"/><path id="p3" d="M621 368Q640 384 660 394L712 424"/>
<path id="p4" d="M680 272L745 312"/><path id="p5" d="M754 313Q768 292 786 266"/><path id="p6" d="M832 379V300"/><path id="p7" d="M999 359Q1030 364 1060 358T1116 359"/>
<path id="p8" d="M1187 272Q1204 310 1205 350"/><path id="p9" d="M1509 303L1560 342 1622 378"/><path id="p10" d="M1567 322L1588 262"/><path id="p11" d="M1529 363L1566 382 1592 399"/>
<path id="p12" d="M1671 292L1728 314"/><path id="p13" d="M1676 371L1698 306"/><path id="p14" d="M1687 402L1750 426"/>
</defs>
<g class="st">
<text><textPath href="#p1">Avenida de la Vega de Ibarra</textPath></text><text><textPath href="#p2">Barakaldo-La Arena</textPath></text><text><textPath href="#p3">Andrés de Jauregibeitia kalea</textPath></text>
<text><textPath href="#p4">Ias de Otero kalea</textPath></text><text><textPath href="#p5">Ramón y Cajal</textPath></text><text><textPath href="#p6">Galindo Bide kalea</textPath></text><text><textPath href="#p7">Vicente Blasco Ibáñez kalea</textPath></text>
<text><textPath href="#p8">Calle Julián Gayarre</textPath></text><text><textPath href="#p9">Bizkaiko Labe Garaien etorbidea</textPath></text><text><textPath href="#p10">Knutsen kalea</textPath></text><text><textPath href="#p11">Calle Rivas kalea</textPath></text>
<text><textPath href="#p12">La Naval kalea</textPath></text><text><textPath href="#p13">Aurrera kalea</textPath></text><text><textPath href="#p14">Avenida de Altos Hornos</textPath></text></g>
<g class="pl" text-anchor="middle"><text x="742" y="287">Albiz</text><text x="895" y="406">Markonzaga</text><text x="1114" y="312">La Protectora</text><text x="1250" y="327">Kueto</text><text x="1084" y="373">La Sierra</text><text x="1365" y="344">La Aurora</text><text x="1360" y="375">Rebonza</text><text x="1640" y="402">Urbinaga</text></g>
<g class="gr" text-anchor="middle"><text x="570" y="337">Ondejeda</text><text x="570" y="351">- Las Camporras</text><text x="570" y="366">parkea</text></g>
<g class="sc" text-anchor="middle"><text x="709" y="348">Albiz Eskola</text><text x="1087" y="401">Instituto</text><text x="1087" y="413">Ángela</text></g>
<g class="sc" text-anchor="middle" style="fill:#1c7a3a"><text x="1465" y="406">Parque</text><text x="1465" y="418">Laderas</text></g>
<g class="sn" text-anchor="middle"><text x="947" y="287">Sestao</text><text x="1493" y="326">Sestao</text></g>
<g fill="none" stroke="#0092da" stroke-width="2"><path d="M978 412v-11h4a3 3 0 0 1 0 6h-4"/><path opacity=".5" d="M1581 334v-11h4a3 3 0 0 1 0 6h-4"/></g>
      </svg></div>
      <div class="text-center t-sm muted mt-2">43.307956, -3.005241</div>
    </section>

    <section class="panel d-flex flex-column align-items-center">
      <h2 class="t-h mb-2 pb-1">Fichaje</h2>
      <button class="out d-flex align-items-center justify-content-center gap-2"><svg class="ic" viewBox="0 0 24 24"><path d="M9 22H4a2 2 0 0 1-2-2V4a2 2 0 0 1 2-2h5M16 17.500l6-5.500-6-5.500M22 12H8"/></svg>Fichar Salida</button>
    </section>

    <section class="panel">
      <h2 class="t-h d-flex align-items-center gap-2 mb-2 pb-1"><svg class="ic slate" viewBox="0 0 24 24"><rect x="3" y="4" width="18" height="18" rx="2"/><path d="M8 1.500V6M16 1.500V6M3 10h18"/></svg>Horario de Hoy (viernes)</h2>
      <div class="hours mb-3">
        <div class="slot"><div class="t-sm slate">Entrada</div><div class="hour fw-bold">09:00</div></div>
        <div class="slot"><div class="t-sm slate">Salida</div><div class="hour fw-bold">17:00</div></div>
      </div>
      <div class="d-flex justify-content-between slate mb-2"><span class="fw-semibold">Progreso del día</span><span>1%</span></div>
      <div class="track"><div style="width:0.7%"></div></div>
    </section>

    <section class="panel">
      <h2 class="t-h d-flex align-items-center gap-2"><svg class="ic slate"><use href="#bars"/></svg>Resumen de Hoy</h2>
    </section>
  </div>
</main>
</div>
<script src="https://cdn.jsdelivr.net/npm/bootstrap@5.3.0/dist/js/bootstrap.bundle.min.js"></script>
</body>
</html>
